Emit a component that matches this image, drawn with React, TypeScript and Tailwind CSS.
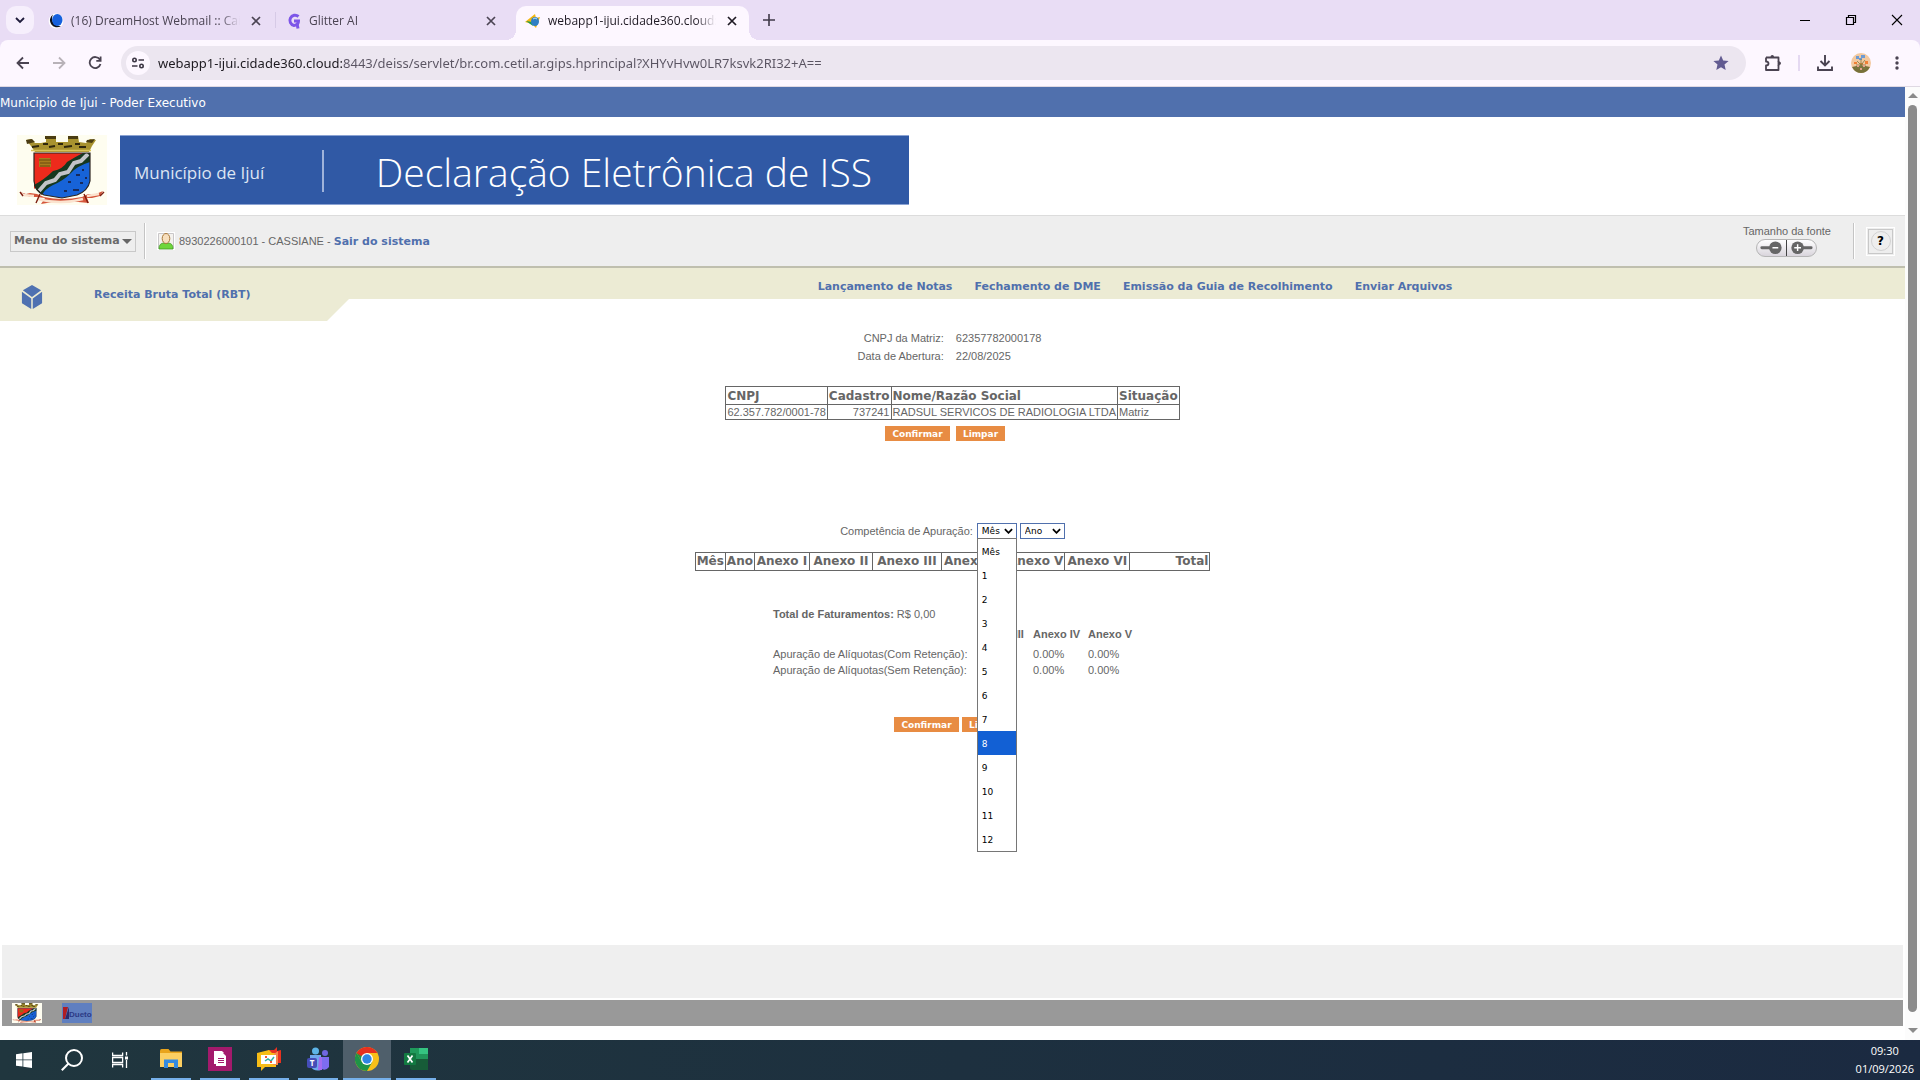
import React from "react";

const SANS = "font-['Liberation_Sans',sans-serif]";
const VERDANA = "font-['DejaVu_Sans',sans-serif]";
const UI = "font-['Open_Sans',sans-serif]";

function Crest({ className }: { className: string }) {
  return (
    <svg viewBox="0 0 90 70" preserveAspectRatio="none" className={className} role="img" aria-label="Brasão de Ijuí">
      <rect width="90" height="70" fill="#fefdf0" />
      <path d="M9 5l5-1 4 4 6 0 5-1 0-5 10 0 0 5 12 0 0-6 10 0 1 6 7 1 4-4 6 1-4 6-3 6H18l-4-6z" fill="#a8922f" />
      <path d="M9 5l6-1 3 3-8 2zM28 1h11v3H28zM51 1h10v3H51zM70 5l8-1-3 4-6-1z" fill="#4a3c12" />
      <path d="M15 12l7-1M26 9l5 0M32 12l6-1M41 9l5 0M47 12l8-1M58 9l5 0M62 12l7 0" stroke="#2f270d" strokeWidth="2.200" />
      <path d="M14 15.500h60" stroke="#d8c45a" strokeWidth="1.600" fill="none" />
      <path d="M17 18H73V46Q71 56 60 60L45 63L27 60Q18 56 17 46Z" fill="#1763d8" />
      <path d="M17 18H66Q54 24 48 34Q34 38 17 54Z" fill="#ed2a1c" />
      <path d="M66 18H73V27Q60 31 54 38Q46 46 36 50Q28 54 25 60Q18 55 17 50Q28 44 36 36Q46 34 50 27Q58 22 66 18Z" fill="#16381f" />
      <path d="M71 19L64 26L57 28L51 37L43 39L38 45L29 48L22 56" fill="none" stroke="#c2c4c8" strokeWidth="4" />
      <path d="M17 18H73V46Q71 56 60 60L45 63L27 60Q18 56 17 46Z" fill="none" stroke="#2c2520" strokeWidth="1.2" />
      <path d="M22 23h11l1 2v7H22z" fill="#a77b1d" />
      <path d="M22 25h12M23 28h11M23 31h10" stroke="#6b4a10" strokeWidth="1" />
      <path d="M59 40h4M65 35h2M51 47h3M63 48h3M56 55h6M68 43h2M47 56h3" stroke="#172a5c" strokeWidth="2" />
      <path d="M3 57l6 2 4-1 7 1 7 3q18 4 38 0l6-3 8 0 7-3-3 5-8 2-5 0 2 5q-22-3-42 0l-6 1 4-6-8-1-7 0z" fill="#d5553a" />
      <path d="M20 64q24 6 46 0M70 61l12-2M5 60l12 1" stroke="#fbe3cf" strokeWidth="2.4" fill="none" />
      <path d="M19 68l4-9M71 68l-4-9M3 57l3 4M87 57l-4 4" stroke="#7c1d10" strokeWidth="1.4" />
    </svg>
  );
}

function CloseGlyph() {
  return (
    <svg viewBox="0 0 10 10" className="size-[10px]" stroke="currentColor" strokeWidth="1.7" fill="none">
      <path d="M1 1l8 8M9 1l-8 8" />
    </svg>
  );
}

function Tab({ icon, title, active }: { icon: React.ReactNode; title: string; active?: boolean }) {
  return (
    <div
      className={
        active
          ? "relative flex h-[34px] w-[233px] shrink-0 items-center rounded-t-[10px] bg-[#fdf7ff] pr-[10px] pb-[5px] pl-[9px] text-[#1f1a24]"
          : "flex h-[34px] w-full items-center pb-[5px] text-[#4b4453]"
      }
    >
      {active && (
        <>
          <span className="absolute bottom-0 -left-[10px] size-[10px] bg-[radial-gradient(circle_at_0_0,transparent_10px,#fdf7ff_10px)]" />
          <span className="absolute -right-[10px] bottom-0 size-[10px] bg-[radial-gradient(circle_at_100%_0,transparent_10px,#fdf7ff_10px)]" />
        </>
      )}
      <span className="flex size-4 shrink-0 items-center justify-center">{icon}</span>
      <span className="ml-[7px] min-w-0 flex-1 overflow-hidden text-[12px] leading-4 whitespace-nowrap [mask-image:linear-gradient(to_right,black_88%,transparent)]">
        {title}
      </span>
      <button type="button" aria-label="Fechar guia" className="ml-[9px] flex size-[14px] shrink-0 items-center justify-center">
        <CloseGlyph />
      </button>
    </div>
  );
}

function BrowserChrome() {
  return (
    <header className={`${UI} shrink-0 bg-[#e9ddf5]`}>
      <div className="flex h-10 items-end">
        <button type="button" aria-label="Pesquisar guias" className="mb-[6px] ml-[6px] flex size-7 items-center justify-center rounded-[10px] bg-[#f6effc]">
          <svg viewBox="0 0 10 10" className="size-[10px]" fill="none" stroke="#1e1b3a" strokeWidth="1.8"><path d="M1 3l4 4 4-4" /></svg>
        </button>
        <div className="ml-[14px] flex min-w-0">
          <div className="mr-[12px] w-[215px]">
            <Tab
              title="(16) DreamHost Webmail :: Caixa"
              icon={
                <svg viewBox="0 0 16 16" className="size-4">
                  <circle cx="8" cy="8" r="7.4" fill="#fff" />
                  <path d="M5 1.4A7 7 0 1 0 13 13C6 14 2 7 5 1.400z" fill="#10131c" />
                  <ellipse cx="9.300" cy="7" rx="5.200" ry="6" fill="#1560dd" />
                </svg>
              }
            />
          </div>
          <span className="mt-[6px] h-4 w-px self-start bg-[#d6cae6]" />
          <div className="mr-[18px] ml-[10px] w-[212px]">
            <Tab
              title="Glitter AI"
              icon={
                <svg viewBox="0 0 16 16" className="size-4" fill="none" stroke="#7d55e8" strokeWidth="3">
                  <path d="M12.500 3.500A5.200 5.200 0 1 0 8 12.500Q12.500 12 12.500 8H8" />
                  <path d="M11 10.500l1 5" />
                </svg>
              }
            />
          </div>
          <Tab
            active
            title="webapp1-ijui.cidade360.cloud:8443"
            icon={
              <svg viewBox="0 0 16 16" className="size-4">
                <path d="M0 9L10 1l1 4 4-1-3 8-1 3-4-4z" fill="#f3b70f" />
                <path d="M1 8l6 1 1 4z" fill="#1d9a57" />
                <ellipse cx="10" cy="8.500" rx="4" ry="4.500" fill="#2e7fc4" />
                <path d="M8 6q2-2 4 0" stroke="#b8e0f5" fill="none" />
              </svg>
            }
          />
          <button type="button" aria-label="Nova guia" className="ml-[12px] flex size-4 items-center justify-center self-start pt-1 pb-0 mt-[4px]">
            <svg viewBox="0 0 12 12" className="size-3 shrink-0" stroke="#3f3948" strokeWidth="1.6"><path d="M6 0v12M0 6h12" /></svg>
          </button>
        </div>
        <div className="mr-[17px] mb-[14px] ml-auto flex items-center gap-[34px] text-black">
          <button type="button" aria-label="Minimizar" className="size-3"><svg viewBox="0 0 12 12" stroke="currentColor"><path d="M1 6.500h10" /></svg></button>
          <button type="button" aria-label="Restaurar" className="size-3">
            <svg viewBox="0 0 12 12" fill="none" stroke="currentColor" strokeWidth="1.200"><path d="M1.500 3.500h7v7h-7zM3.500 3.500v-2h7v7h-2" /></svg>
          </button>
          <button type="button" aria-label="Fechar" className="size-3"><svg viewBox="0 0 12 12" stroke="currentColor" strokeWidth="1.100"><path d="M1 1l10 10M11 1L1 11" /></svg></button>
        </div>
      </div>
      <div className="flex h-[47px] items-center rounded-t-lg border-b border-[#dfd9e3] bg-[#fdf7ff] pr-[15px] pl-[16px]">
        <div className="flex items-center gap-[22px] text-[#4a4351]">
          <button type="button" aria-label="Voltar"><svg viewBox="0 0 14 14" className="size-[14px]" fill="none" stroke="currentColor" strokeWidth="1.800"><path d="M13 7H2M7 1.500L1.500 7 7 12.500" /></svg></button>
          <button type="button" aria-label="Avançar" className="text-[#b8b2b8]"><svg viewBox="0 0 14 14" className="size-[14px]" fill="none" stroke="currentColor" strokeWidth="1.800"><path d="M1 7h11M7 1.500L12.500 7 7 12.500" /></svg></button>
          <button type="button" aria-label="Recarregar"><svg viewBox="0 0 14 14" className="size-[14px]" fill="none" stroke="currentColor" strokeWidth="1.800"><path d="M11.800 3.500A5.500 5.500 0 1 0 12.500 8M12.600 0.500V4.800H8.300" /></svg></button>
        </div>
        <div className="ml-[19px] flex h-[34px] min-w-0 flex-1 items-center rounded-full bg-[#ece6f0] pr-[17px] pl-[5px]">
          <button type="button" aria-label="Informações do site" className="flex size-6 shrink-0 items-center justify-center rounded-full bg-[#fdf7ff]">
            <svg viewBox="0 0 14 14" className="size-[14px]" fill="none" stroke="#3c3644" strokeWidth="1.600">
              <circle cx="3.500" cy="4" r="1.700" /><path d="M7.500 4H13M1 10h5.500" /><circle cx="10.500" cy="10" r="1.700" />
            </svg>
          </button>
          <input
            aria-label="Endereço"
            readOnly
            className="ml-2 min-w-0 flex-1 bg-linear-to-r from-[#1d1a20] from-[184px] to-[#5a5462] to-[184px] bg-clip-text font-['Noto_Sans',sans-serif] text-[13px] leading-5 text-transparent outline-none"
            value="webapp1-ijui.cidade360.cloud:8443/deiss/servlet/br.com.cetil.ar.gips.hprincipal?XHYvHvw0LR7ksvk2RI32+A=="
          />
          <button type="button" aria-label="Favoritos"><svg viewBox="0 0 16 16" className="size-4" fill="#625b91"><path d="M8 0.500l2.200 5 5.400.5-4.100 3.600 1.200 5.400L8 12.200 3.300 15l1.200-5.400L.4 6l5.400-.5z" /></svg></button>
        </div>
        <button type="button" aria-label="Extensões" className="ml-[18px]">
          <svg viewBox="0 0 18 18" className="size-[18px]" fill="none" stroke="#4a4351" strokeWidth="1.800">
            <path d="M2 3.500h12.500v4M14.500 11v5H2v-4.500q2.500 0 2.500-2T2 7.500v-4" strokeLinejoin="round" />
            <path d="M6.500 3q0-2 1.800-2T10 3zM15 7.500q2 0 2 1.800T15 11z" fill="#4a4351" stroke="none" />
            <path d="M14.500 7v4.500" />
          </svg>
        </button>
        <span className="mx-[16px] h-4 w-[2px] bg-[#e5d9f2]" />
        <button type="button" aria-label="Downloads"><svg viewBox="0 0 18 18" className="size-[18px]" fill="none" stroke="#4a4351" strokeWidth="1.900"><path d="M9 1v10M4.500 7L9 11.500 13.500 7M2 12.500V16h14v-3.500" /></svg></button>
        <button type="button" aria-label="Perfil" className="ml-[17px]">
          <svg viewBox="0 0 20 20" className="size-5">
            <circle cx="10" cy="10" r="10" fill="#f3c9a0" />
            <path d="M1 14q9-3 18 0Q16 20 10 20T1 14z" fill="#77713a" />
            <path d="M5 3h3v3H5zM10 2h4v3h-4zM8 5h3v2H8z" fill="#6f9bd3" />
            <path d="M3 9h3v2H3zM14 8h3v3h-3zM9 10h3v2H9z" fill="#f07f35" />
            <path d="M6 8l8 8M14 7l-7 9M10 6v11M5 12h10M4 15h11" stroke="#7d7b45" strokeWidth=".8" />
            <path d="M6 12h2v2H6zM12 12h2v2h-2zM9 15h2v2H9z" fill="#e3a08c" />
          </svg>
        </button>
        <button type="button" aria-label="Menu" className="ml-[18px]"><svg viewBox="0 0 16 16" className="size-4" fill="#4a4351"><circle cx="8" cy="3" r="1.700" /><circle cx="8" cy="8" r="1.700" /><circle cx="8" cy="13" r="1.700" /></svg></button>
      </div>
    </header>
  );
}

function SystemBar() {
  return (
    <div className="flex h-[53px] items-center border-t border-b-2 border-t-[#dcdcdc] border-b-[#bfbfae] bg-[#eee] pr-[10px] pl-[10px]">
      <button type="button" className={`${VERDANA} flex h-[21px] w-[126px] items-center justify-between border border-[#c9c9c9] pr-[3px] pl-[3px] text-[11px] font-bold text-[#6a6a6a]`}>
        Menu do sistema
        <span className="border-x-5 border-t-5 border-x-transparent border-t-[#666]" />
      </button>
      <span className="ml-2 h-9 w-[2px] border-r border-l border-r-white border-l-[#c4c4c4]" />
      <svg viewBox="0 0 18 18" className="ml-[11px] size-[18px]">
        <path d="M0 0h18v18H0z" fill="#fff" /><path d="M1.500 1.500h15v15h-15z" fill="#f4f2ee" stroke="#c9c7c9" />
        <path d="M2 17q0-6 5-6h4q5 0 5 6z" fill="#6fd63a" stroke="#3f9a22" strokeWidth=".8" />
        <ellipse cx="9" cy="6.500" rx="3.800" ry="5" fill="#f7dfbd" stroke="#a9793b" />
      </svg>
      <p className="ml-1 pt-[2px] text-[11px] text-[#666]">
        8930226000101 - CASSIANE -{" "}
        <a href="#sair" className={`${VERDANA} font-bold text-[#5070ad]`}>Sair do sistema</a>
      </p>
      <div className="mb-[2px] ml-auto flex flex-col items-center text-[11px] leading-[14px] text-[#666]">
        Tamanho da fonte
        <div className="mt-px flex h-[18px] w-[61px] overflow-hidden rounded-full border border-[#b5b5b5] bg-linear-to-b from-white to-[#d9d5dc]">
          <button type="button" aria-label="Diminuir fonte" className="flex-1 border-r border-[#444]">
            <svg viewBox="0 0 30 16"><path d="M5 8h13" stroke="#666" strokeWidth="3" strokeLinecap="round" /><circle cx="19" cy="8" r="6.500" fill="#666" /><path d="M16 8h6" stroke="#fff" strokeWidth="1.500" /></svg>
          </button>
          <button type="button" aria-label="Aumentar fonte" className="flex-1">
            <svg viewBox="0 0 30 16"><path d="M12 8h13" stroke="#666" strokeWidth="3" strokeLinecap="round" /><circle cx="11" cy="8" r="6.500" fill="#666" /><path d="M7.500 8h7M11 4.500v7" stroke="#fff" strokeWidth="1.500" /></svg>
          </button>
        </div>
      </div>
      <span className="ml-[22px] h-9 w-[2px] border-r border-l border-r-white border-l-[#c4c4c4]" />
      <button type="button" aria-label="Ajuda" className={`${VERDANA} ml-[11px] flex size-[29px] items-center justify-center border border-white p-px`}>
        <span className="flex size-full items-center justify-center border border-[#c8c8c8]">
          <span className="flex size-[20px] items-center justify-center rounded-full border border-[#d2d2d2] text-[12px] font-bold text-black">?</span>
        </span>
      </button>
    </div>
  );
}

const NAV = ["Lançamento de Notas", "Fechamento de DME", "Emissão da Guia de Recolhimento", "Enviar Arquivos"];

function TitleBar() {
  return (
    <div className={`${VERDANA} flex h-[53px] items-start text-[11px] font-bold text-[#5070ad]`}>
      <div className="flex h-[53px] w-[349px] shrink-0 items-center bg-[#ecebd4] pl-[20px] [clip-path:polygon(0_0,100%_0,100%_31px,327px_100%,0_100%)]">
        <svg viewBox="0 0 22 25" className="mt-[4px] size-[24px]" fill="#4f71b1">
          <path d="M11 0l9.500 5.500L11 12.500 1.500 5.500zM0.500 7l9.700 7v11L.5 19zM21.500 7l-9.700 7v11l9.700-6z" />
        </svg>
        <h1 className="ml-[50px] pt-px">Receita Bruta Total (RBT)</h1>
      </div>
      <nav className="flex h-[31px] flex-1 items-center justify-center gap-[22px] bg-[#ecebd4] pt-[7px] pl-4">
        {NAV.map((n) => (
          <a key={n} href="#nav" className="whitespace-nowrap">{n}</a>
        ))}
      </nav>
    </div>
  );
}

function OrangeButton({ children, wide }: { children: string; wide?: boolean }) {
  return (
    <button type="button" className={`${VERDANA} flex h-[15px] items-center justify-center bg-[#e88c43] text-[9px] font-bold text-white ${wide ? "w-[65px]" : "w-[49px]"}`}>
      {children}
    </button>
  );
}

const MONTHS = ["Mês", "1", "2", "3", "4", "5", "6", "7", "8", "9", "10", "11", "12"];
const COLS = [
  { t: "Mês", w: "w-[30px]" },
  { t: "Ano", w: "w-[29px]" },
  { t: "Anexo I", w: "w-[55px]" },
  { t: "Anexo II", w: "w-[63px]" },
  { t: "Anexo III", w: "w-[69px]" },
  { t: "Anexo IV", w: "w-[65px]" },
  { t: "Anexo V", w: "w-[58px]" },
  { t: "Anexo VI", w: "w-[65px]" },
  { t: "Total", w: "w-[80px]" },
];

function Picker({ id, label, options, width }: { id: string; label: string; options: string[]; width: string }) {
  return (
    <span className={`relative flex h-[16px] ${width}`}>
      <select id={id} aria-label={label} className={`${VERDANA} w-full appearance-none border border-[#5070ad] bg-white pl-[4px] text-[9px] leading-[12px] text-black`}>
        {options.map((o) => <option key={o}>{o}</option>)}
      </select>
      <svg viewBox="0 0 10 6" className="pointer-events-none absolute top-[5px] right-[4px] h-[6px] w-[9px]" fill="none" stroke="#000" strokeWidth="2"><path d="M1 1l4 4 4-4" /></svg>
    </span>
  );
}

function MainContent() {
  return (
    <main className="flex flex-1 flex-col items-center text-[11px] leading-[16px] text-[#666]">
      <dl className="mt-[9px] grid grid-cols-[auto_auto] gap-x-3 gap-y-[2px] pr-[6px]">
        <dt className="text-right">CNPJ da Matriz:</dt><dd>62357782000178</dd>
        <dt className="text-right">Data de Abertura:</dt><dd>22/08/2025</dd>
      </dl>
      <table className="mt-[22px] border-collapse border border-[#666] leading-[14px] whitespace-nowrap [&_td]:border [&_td]:border-[#666] [&_td]:px-px [&_th]:border [&_th]:border-[#666] [&_th]:px-px">
        <thead>
          <tr className={`${VERDANA} h-[18px] text-left text-[12px]`}>
            <th className="w-[101px]">CNPJ</th><th>Cadastro</th><th>Nome/Razão Social</th><th>Situação</th>
          </tr>
        </thead>
        <tbody>
          <tr><td>62.357.782/0001-78</td><td className="text-right">737241</td><td>RADSUL SERVICOS DE RADIOLOGIA LTDA</td><td>Matriz</td></tr>
        </tbody>
      </table>
      <div className="mt-[6px] flex gap-[6px] pr-[15px]">
        <OrangeButton wide>Confirmar</OrangeButton>
        <OrangeButton>Limpar</OrangeButton>
      </div>

      <div className="mt-[82px] flex items-center">
        <label htmlFor="mes" className="mr-[4px]">Competência de Apuração:</label>
        <div className="relative mr-[3px]">
          <Picker id="mes" label="Mês" options={MONTHS} width="w-[40px]" />
          <ul role="listbox" aria-label="Mês" className={`${VERDANA} absolute top-[15px] left-0 z-10 w-[40px] border border-[#767676] bg-white text-[9px] text-black`}>
            {MONTHS.map((m) => (
              <li
                key={m}
                role="option"
                aria-selected={m === "8"}
                className={m === "8" ? "h-6 bg-[#1260d4] pt-[2px] pl-[4px] leading-[22px] text-white" : "h-6 pt-[2px] pl-[4px] leading-[22px]"}
              >
                {m}
              </li>
            ))}
          </ul>
        </div>
        <Picker id="ano" label="Ano" options={["Ano"]} width="w-[45px]" />
      </div>

      <table className={`${VERDANA} mt-[13px] table-fixed border-collapse text-[12px] leading-[17px] whitespace-nowrap`}>
        <thead>
          <tr>
            {COLS.map((c) => (
              <th key={c.t} className={`${c.w} border border-[#666] px-px ${c.t === "Total" ? "text-right" : "text-center"}`}>{c.t}</th>
            ))}
          </tr>
        </thead>
      </table>

      <div className="mt-[35px] w-[359px]">
        <p><b>Total de Faturamentos:</b> R$ 0,00</p>
        <table className="mt-[4px] w-full table-fixed text-left whitespace-nowrap">
          <thead>
            <tr className="h-[20px] align-top">
              <td className="w-[205px]" />
              <th className="w-[55px]">Anexo III</th><th className="w-[55px]">Anexo IV</th><th>Anexo V</th>
            </tr>
          </thead>
          <tbody>
            <tr><td>Apuração de Alíquotas(Com Retenção):</td><td>0.00%</td><td>0.00%</td><td>0.00%</td></tr>
            <tr><td>Apuração de Alíquotas(Sem Retenção):</td><td>0.00%</td><td>0.00%</td><td>0.00%</td></tr>
          </tbody>
        </table>
      </div>
      <div className="mt-[39px] flex gap-[3px]">
        <OrangeButton wide>Confirmar</OrangeButton>
        <OrangeButton>Limpar</OrangeButton>
      </div>
    </main>
  );
}

function Running({ label, active, children }: { label: string; active?: boolean; children: React.ReactNode }) {
  return (
    <button
      type="button"
      aria-label={label}
      className={`flex h-10 items-center justify-center border-b-2 border-[#76b0ea] ${active ? "w-12 bg-[#4f5f6b]" : "w-10"}`}
    >
      {children}
    </button>
  );
}

function Taskbar() {
  return (
    <footer className={`${UI} flex h-10 shrink-0 items-center bg-linear-to-r from-[#20363e] via-[#1d303f] to-[#1b2a41] pl-[16px]`}>
      <button type="button" aria-label="Iniciar"><svg viewBox="0 0 16 16" className="size-4" fill="#fff"><path d="M0 2.300l6.500-1v6.200H0zM7.300 1.200L16 0v7.500H7.300zM0 8.300h6.500v6.300L0 13.700zM7.300 8.300H16V16l-8.700-1.200z" /></svg></button>
      <button type="button" aria-label="Pesquisar" className="ml-[29px]"><svg viewBox="0 0 22 22" className="size-[22px]" fill="none" stroke="#fff" strokeWidth="2"><circle cx="13" cy="9" r="8" /><path d="M7.500 14.500L.8 21.200" /></svg></button>
      <button type="button" aria-label="Visão de tarefas" className="ml-[29px]"><svg viewBox="0 0 16 16" className="size-4" fill="none" stroke="#fff" strokeWidth="1.300"><path d="M.6.500v3h10v-3M.6 15.500v-3h10v3M.6 5.500h10v5H.6zM14.500 0v3.500M14.500 8v8" /><path d="M13 4.500h3v3h-3z" fill="#fff" stroke="none" /></svg></button>
      <div className="ml-[23px] flex gap-[9px]">
        <Running label="Explorador de Arquivos">
          <svg viewBox="0 0 22 20" className="h-5 w-[22px]"><path d="M0 2q0-2 1.500-2h7l2 2.500H22V6H0z" fill="#e9a41c" /><path d="M0 4h22v14H0z" fill="#fccf62" /><path d="M4 10.500h14V19h-4v-5H8v5H4z" fill="#358adf" /></svg>
        </Running>
        <Running label="Documentos">
          <svg viewBox="0 0 24 24" className="size-6"><path d="M0 0h24v24H0z" fill="#a31a6c" /><path d="M6 4h8l2 2H8v11H6z" fill="#fff" /><path d="M8 6h7l3 3v10H8z" fill="#fff" /><path d="M10 11.500h6M10 13.500h6M10 15.500h6" stroke="#a31a6c" /></svg>
        </Running>
        <Running label="Mensagens">
          <svg viewBox="0 0 24 24" className="size-6"><path d="M11 3h6l3-3v4l4-1v13h-8z" fill="#e8321f" /><path d="M0 6l12-3 3 3h4v14H8l-4 4v-4H0z" fill="#f7bd16" /><path d="M17 7l4-3v14h-5z" fill="#f58a4c" /><path d="M4 8h15v9H4z" fill="#fff" /><path d="M8 14l3-2 3 2 3-4" stroke="#32b0a0" strokeWidth="1.500" fill="none" /><path d="M8 9h2v2H8zM13 14h2v2h-2z" fill="#ee5735" /></svg>
        </Running>
        <Running label="Teams">
          <svg viewBox="0 0 22 24" className="h-6 w-[22px]"><circle cx="8.500" cy="4" r="3.500" fill="#5db5e8" /><circle cx="18" cy="6" r="3" fill="#7067e2" /><path d="M13 10h9v10q-3 4-7 2z" fill="#7d6cf0" /><path d="M3 8h11v15q-7 2-11-4z" fill="#6fa8ee" /><path d="M12 10h3v13h-4z" fill="#a26cf0" /><rect y="11" width="10" height="10" rx="2" fill="#454db8" /><text x="5" y="19" fill="#fff" fontSize="8" fontWeight="700" textAnchor="middle">T</text></svg>
        </Running>
      </div>
      <div className="ml-[5px] flex gap-[5px]">
        <Running label="Chrome" active>
          <svg viewBox="0 0 24 24" className="size-6"><circle cx="12" cy="12" r="12" fill="#f9bf18" /><path d="M1.600 6A12 12 0 0 1 22.400 6H12z" fill="#e6301f" /><path d="M1.600 6A12 12 0 0 0 12 24l5.200-9-10.400 0z" fill="#1f9347" /><path d="M1.600 6L6.800 15 12 6.500z" fill="#1f9347" /><path d="M1.600 6L12 6l-6 3z" fill="#e6301f" /><circle cx="12" cy="12" r="6" fill="#fff" /><circle cx="12" cy="12" r="4.700" fill="#2f86e4" /></svg>
        </Running>
        <Running label="Excel">
          <svg viewBox="0 0 24 22" className="h-[22px] w-6"><path d="M6 0h9v6H6z" fill="#1f9a5b" /><path d="M15 0h9v6h-9z" fill="#35c481" /><path d="M6 6h18v5H6z" fill="#20965a" /><path d="M6 11h18v11H8q-2 0-2-2z" fill="#175c38" /><rect y="5" width="12" height="12" rx="1" fill="#127a41" /><path d="M3.500 7.500l5 7M8.500 7.500l-5 7" stroke="#fff" strokeWidth="1.700" /></svg>
        </Running>
      </div>
      <div className="mr-[6px] ml-auto text-center text-[11px] leading-[18px] text-white">
        <p>09:30</p>
        <p>01/09/2026</p>
      </div>
    </footer>
  );
}

export default function App() {
  return (
    <div className={`${SANS} flex min-h-screen flex-col bg-white`}>
      <BrowserChrome />
      <div className="flex flex-1">
        <div className="flex min-w-0 flex-1 flex-col">
          <div className={`${VERDANA} flex h-[30px] items-center bg-[#5070ad] pt-[2px] text-[12px] text-white`}>Municipio de Ijui - Poder Executivo</div>
          <div className="flex h-[98px] items-center pt-[8px] pl-[17px]">
            <Crest className="h-[70px] w-[90px]" />
            <div className={`${UI} ml-[13px] flex h-[70px] w-[789px] items-center border-y border-[#8ba3d3] bg-[#3059a5] pt-[4px] pl-[14px] font-light whitespace-nowrap text-white`}>
              <span className="pt-[2px] text-[17px] font-normal text-[#dde5f3]">Município de Ijuí</span>
              <span className="mb-[2px] ml-auto h-[42px] w-[2px] bg-[#9fb3da]" />
              <span className="mr-[37px] ml-[52px] text-[39px] leading-[50px]">Declaração Eletrônica de ISS</span>
            </div>
          </div>
          <SystemBar />
          <TitleBar />
          <MainContent />
          <div className="mx-[2px] mb-[14px]">
            <div className="h-[53px] bg-[#efefef]" />
            <div className="mt-[2px] flex h-[26px] items-center gap-[20px] bg-[#999] pl-[10px]">
              <Crest className="h-5 w-[30px]" />
              <svg viewBox="0 0 30 20" className="h-5 w-[30px]" role="img" aria-label="Dueto">
                <path d="M0 0h30v20H0z" fill="#5f7fc0" /><path d="M1 4h5L3 16H1z" fill="#b01c22" /><path d="M3 16L7 4v12z" fill="#2a2a6c" />
                <text x="7" y="14" fontSize="8" fontWeight="700" fontFamily="Liberation Sans" fill="#2c3a86">Dueto</text>
              </svg>
            </div>
          </div>
        </div>
        <div className="flex w-[15px] flex-col items-center bg-[#fcfcfc] pt-[6px] pb-[7px]">
          <span className="border-x-5 border-b-5 border-x-transparent border-b-[#8b8b8b]" />
          <span className="my-[7px] w-[9px] flex-1 rounded-full bg-[#8b8b8b]" />
          <span className="mt-[9px] border-x-5 border-t-5 border-x-transparent border-t-[#8b8b8b]" />
        </div>
      </div>
      <Taskbar />
    </div>
  );
}
